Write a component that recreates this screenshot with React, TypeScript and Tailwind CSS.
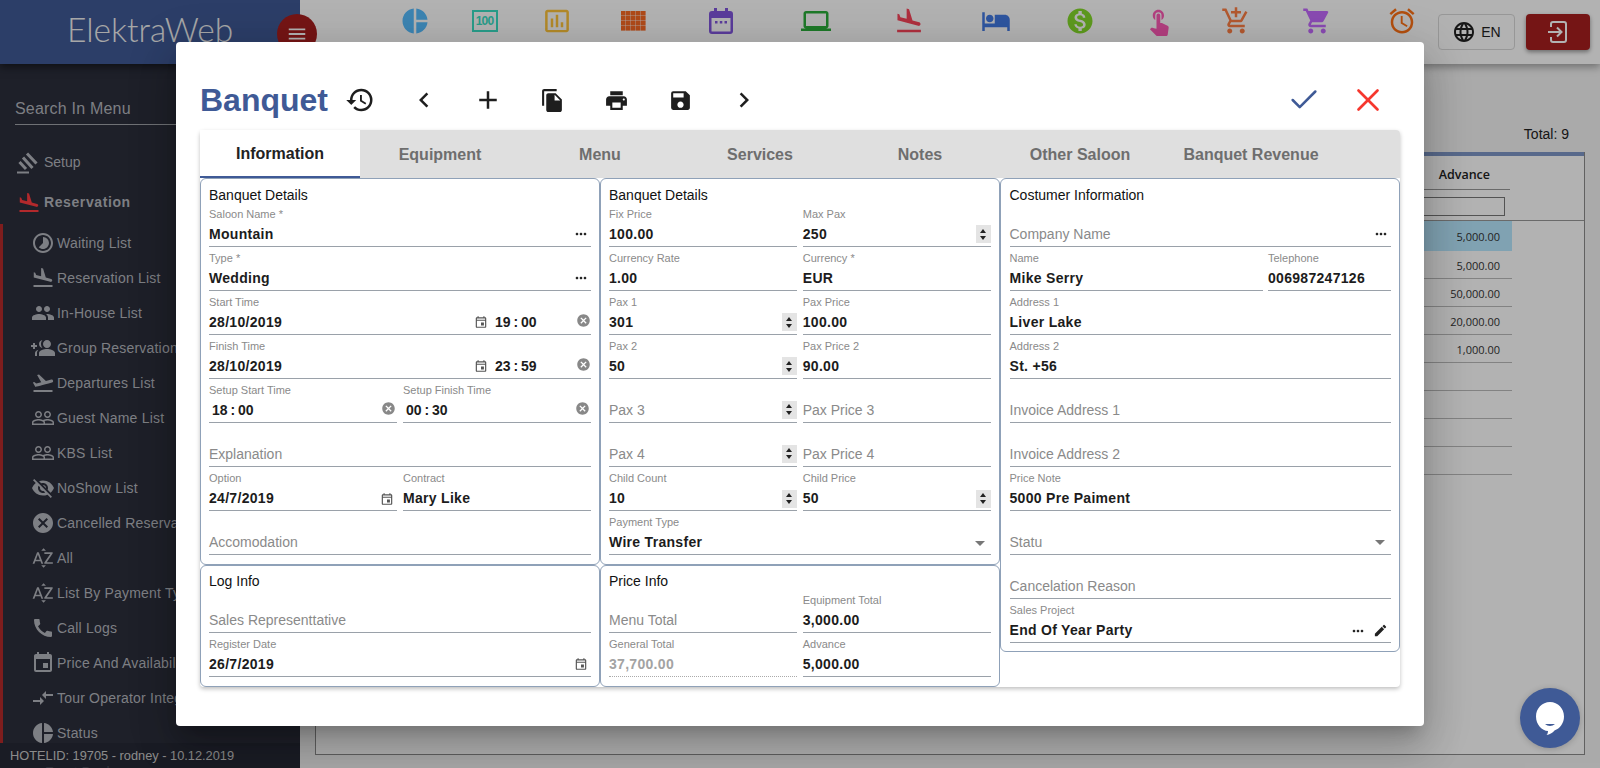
import type { ReactNode } from 'react';
import { Check, X } from 'lucide-react';
import {
  MdAccessAlarm, MdAdd, MdAddShoppingCart, MdArrowDropDown, MdCall, MdCancel, MdChevronLeft,
  MdChevronRight, MdCompareArrows, MdEdit, MdEvent, MdFileCopy, MdFlightLand, MdFlightTakeoff,
  MdGroupAdd, MdHistory, MdHotel, MdInsertChartOutlined, MdLanguage, MdLaptop, MdMenu, MdMonetizationOn,
  MdMoreHoriz, MdOutlineEvent, MdPeople, MdPeopleOutline, MdPieChart, MdPrint,
  MdSave, MdShoppingCart, MdSortByAlpha, MdTimelapse, MdTouchApp, MdVisibilityOff,
} from 'react-icons/md';

const sideItems: { label: string; icon: ReactNode }[] = [
  { label: 'Waiting List', icon: <MdTimelapse size={24} /> },
  { label: 'Reservation List', icon: <MdFlightLand size={24} /> },
  { label: 'In-House List', icon: <MdPeople size={24} /> },
  { label: 'Group Reservations', icon: <MdGroupAdd size={24} className="-scale-x-100" /> },
  { label: 'Departures List', icon: <MdFlightTakeoff size={24} /> },
  { label: 'Guest Name List', icon: <MdPeopleOutline size={24} /> },
  { label: 'KBS List', icon: <MdPeopleOutline size={24} /> },
  { label: 'NoShow List', icon: <MdVisibilityOff size={24} /> },
  { label: 'Cancelled Reservations', icon: <MdCancel size={24} /> },
  { label: 'All', icon: <MdSortByAlpha size={24} /> },
  { label: 'List By Payment Type', icon: <MdSortByAlpha size={24} /> },
  { label: 'Call Logs', icon: <MdCall size={24} /> },
  { label: 'Price And Availability', icon: <MdEvent size={24} /> },
  { label: 'Tour Operator Integration', icon: <MdCompareArrows size={24} /> },
  { label: 'Status', icon: <MdPieChart size={24} /> },
];

const topIcons: { cell: string; icon: ReactNode }[] = [
  { cell: 'w-[68px] text-[#56bdff]', icon: <MdPieChart size={30} /> },
  { cell: 'w-[71px] text-[#3ce0c5]', icon: <HundredIcon /> },
  { cell: 'w-[73px] text-[#ffc53c]', icon: <MdInsertChartOutlined size={30} /> },
  { cell: 'w-[81px] text-[#fb6a25]', icon: <BrickIcon /> },
  { cell: 'w-[94px] text-[#8156df]', icon: <CalendarIcon /> },
  { cell: 'w-[96px] text-[#2cae3c]', icon: <MdLaptop size={30} /> },
  { cell: 'w-[89px] text-[#fb455b]', icon: <MdFlightLand size={30} /> },
  { cell: 'w-[85px] text-[#437ae4]', icon: <MdHotel size={30} /> },
  { cell: 'w-[83px] text-[#86dc2b]', icon: <MdMonetizationOn size={30} /> },
  { cell: 'w-[76px] text-[#ff5bb6]', icon: <MdTouchApp size={30} /> },
  { cell: 'w-[77px] text-[#ff8045]', icon: <MdAddShoppingCart size={30} /> },
  { cell: 'w-[85px] text-[#c56aff]', icon: <MdShoppingCart size={30} /> },
  { cell: 'w-[86px] text-[#ff7216]', icon: <MdAccessAlarm size={30} /> },
];

const tabs = ['Information', 'Equipment', 'Menu', 'Services', 'Notes', 'Other Saloon', 'Banquet Revenue'];
const advances = ['5,000.00', '5,000.00', '50,000.00', '20,000.00', '1,000.00', '', '', '', ''];

function HundredIcon() {
  return (
    <div className="flex h-[22px] w-[26px] items-center justify-center border-[2.5px] border-current text-[12px] font-bold leading-none tracking-[-0.8px]">
      100
    </div>
  );
}

function BrickIcon() {
  return (
    <svg width="25" height="20" viewBox="0 0 25 20" fill="currentColor">
      {[0, 5, 10, 15].map((y) =>
        [0, 5, 10, 15, 20].map((x) => <rect key={`${x}-${y}`} x={x} y={y} width="4.6" height="4.6" />),
      )}
    </svg>
  );
}

function CalendarIcon() {
  return (
    <svg width="24" height="26" viewBox="0 0 24 26" fill="currentColor">
      <path d="M5 0h3v3h8V0h3v3h2a3 3 0 0 1 3 3v17a3 3 0 0 1-3 3H3a3 3 0 0 1-3-3V6a3 3 0 0 1 3-3h2zM2.500 10v13a.5.5 0 0 0 .5.5h18a.5.5 0 0 0 .5-.5V10z" />
      <rect x="6" y="13" width="2.500" height="2.500" />
      <rect x="10.800" y="13" width="2.500" height="2.500" />
      <rect x="15.500" y="13" width="2.500" height="2.500" />
    </svg>
  );
}

function SetupIcon() {
  return (
    <svg width="22" height="22" viewBox="0 0 22 22" fill="none" stroke="currentColor" strokeWidth="3">
      <path d="M10 1.500l9.500 10M6 5.500l9.500 10.500M2.500 10l6.500 7" />
      <path d="M0 20.500h12" strokeWidth="2" />
    </svg>
  );
}

function ExitIcon() {
  return (
    <svg width="22" height="24" viewBox="0 0 22 24" fill="none" stroke="currentColor" strokeWidth="2">
      <path d="M4 7V4a2 2 0 0 1 2-2h11a2 2 0 0 1 2 2v16a2 2 0 0 1-2 2H6a2 2 0 0 1-2-2v-3" />
      <path d="M1 12h13M10 7.500l4.500 4.500-4.500 4.500" />
    </svg>
  );
}

function Spinner() {
  return (
    <div className="flex h-[18px] w-[15px] shrink-0 flex-col items-center justify-center gap-[3px] bg-[#e4e4e4]">
      <div className="h-0 w-0 border-x-[3.5px] border-b-[4px] border-x-transparent border-b-[#222]" />
      <div className="h-0 w-0 border-x-[3.5px] border-t-[4px] border-x-transparent border-t-[#222]" />
    </div>
  );
}

function More() {
  return <MdMoreHoriz size={16} className="mr-[2px] shrink-0 text-[#222]" />;
}

function Calendar() {
  return <MdOutlineEvent size={14} className="mr-[3px] shrink-0 text-[#555]" />;
}

function Clear() {
  return <MdCancel size={15} className="-mt-[4px] shrink-0 text-[#888]" />;
}

function Field({ label, value, children, muted, dotted }: {
  label?: string;
  value?: string;
  children?: ReactNode;
  muted?: boolean;
  dotted?: boolean;
}) {
  return (
    <div className={`flex h-[44.1px] min-w-0 flex-col pt-[4px] border-b ${dotted ? 'border-dotted border-[#aaa]' : 'border-[#9aa1a9]'}`}>
      <div className="h-[14px] shrink-0 text-[11px] leading-[14px] text-[#8a8a8a]">{value || children ? label : ''}</div>
      <div className="mt-[1px] flex h-[25px] shrink-0 items-center justify-between whitespace-nowrap">
        {value || children ? (
          <>
            <span className={`text-[14px] font-bold tracking-[0.3px] ${muted ? 'text-[#a3a3a3]' : 'text-[#1c1c1c]'}`}>{value}</span>
            {children}
          </>
        ) : (
          <span className="text-[14px] text-[#8a8a8a]">{label}</span>
        )}
      </div>
    </div>
  );
}

function Time({ value, className = '' }: { value: string; className?: string }) {
  return <span className={`text-[14px] font-bold text-[#1c1c1c] [word-spacing:-1px] ${className}`}>{value}</span>;
}

function TimeField({ label, date, time }: { label: string; date: string; time: string }) {
  return (
    <Field label={label} value={date}>
      <div className="flex items-center">
        <Calendar />
        <Time value={time} className="ml-[4px] w-[81px]" />
        <Clear />
      </div>
    </Field>
  );
}

function Card({ title, compact, className = '', children }: { title: string; compact?: boolean; className?: string; children: ReactNode }) {
  return (
    <div className={`rounded-[6px] border border-[#8fa1b8] bg-white px-[8px] ${className}`}>
      <div className={`flex items-end text-[14px] leading-[16px] text-[#111] ${compact ? 'h-[22.5px] leading-[14px]' : 'h-[23.5px]'}`}>{title}</div>
      {children}
    </div>
  );
}

function Half({ children }: { children: ReactNode }) {
  return <div className="grid grid-cols-2 gap-x-[6px]">{children}</div>;
}

function Sidebar() {
  return (
    <aside className="relative flex h-full w-[300px] shrink-0 flex-col overflow-hidden bg-[#2b2e3b] text-[#b4b6bd]">
      <div className="flex h-[64px] shrink-0 items-center bg-[#3f5a96] pb-[5px] pl-[67px] font-['Lato',sans-serif] text-[33.5px] font-light text-[#f0f0f0] shadow-[0_3px_8px_rgba(0,0,0,0.5)]">
        ElektraWeb
      </div>
      <div className="mx-[15px] mt-[33px] h-[27.5px] shrink-0 border-b border-[#a0a2a8] text-[16px] leading-[24px] tracking-[0.2px]">
        Search In Menu
      </div>
      <div className="mt-[18px] flex h-[40px] shrink-0 items-center gap-[5px] pl-[17px] text-[14px]">
        <SetupIcon />
        Setup
      </div>
      <div className="flex h-[40px] shrink-0 items-center gap-[3px] pl-[17px] text-[14px] font-bold tracking-[0.6px]">
        <MdFlightLand size={24} className="text-[#ff3b3f]" />
        Reservation
      </div>
      <div className="mt-[1.5px] border-l-[3px] border-[#b52a2a] pl-[28px] pt-[1.5px]">
        {sideItems.map((item) => (
          <div key={item.label} className="flex h-[35px] items-center gap-[2px] whitespace-nowrap text-[14px] tracking-[0.2px]">
            {item.icon}
            {item.label}
          </div>
        ))}
      </div>
      <div className="absolute inset-x-0 bottom-0 h-[25px] overflow-hidden bg-[#262935] pl-[10px] pt-[5px] text-[12.8px] leading-[16px] text-[#c8c8c8]">
        HOTELID: 19705 - rodney - 10.12.2019
        <div className="pl-[35px] text-[14px] text-[#454855]">Front Desk</div>
      </div>
    </aside>
  );
}

function Background() {
  return (
    <div className="flex h-full">
      <Sidebar />
      <div className="flex min-w-0 flex-1 flex-col bg-[#f4f4f4]">
        <header className="flex h-[64px] shrink-0 items-center bg-white shadow-[0_3px_8px_rgba(0,0,0,0.35)]">
          <div className="flex h-full items-start pl-[81px] pt-[6px]">
            {topIcons.map((t, i) => (
              <div key={i} className={`flex h-[30px] items-center justify-center ${t.cell}`}>{t.icon}</div>
            ))}
          </div>
          <div className="ml-[-7px] flex h-[36px] w-[77px] items-center justify-center gap-[5px] rounded-[4px] border border-[#d8d8d8] text-[14px] text-[#222]">
            <MdLanguage size={24} />
            EN
          </div>
          <div className="ml-[11px] flex h-[36px] w-[64px] items-center justify-center rounded-[4px] bg-[#a81f1f] text-white shadow-[0_2px_4px_rgba(0,0,0,0.4)]">
            <ExitIcon />
          </div>
        </header>
        <div className="flex h-[88px] shrink-0 items-end justify-end pb-[10px] pr-[31px] text-[14px] leading-[16px] text-[#222]">
          Total: 9
        </div>
        <div className="mb-[13px] ml-[15px] mr-[15px] flex flex-1 flex-col border-x border-b border-[#8c8c8c] bg-white font-['Open_Sans',sans-serif]">
          <div className="h-[4px] shrink-0 bg-[#7f97c8]" />
          <div className="flex h-[34px] shrink-0 justify-end pr-[74px]">
            <div className="flex w-[200px] items-center justify-end border-b border-[#999] pr-[20px] pt-[5px] text-[12.5px] font-semibold text-[#222]">Advance</div>
          </div>
          <div className="flex h-[31px] shrink-0 items-center border-b border-[#999] pl-[400px] pr-[79px] pt-[2px]">
            <div className="h-[19px] w-full border border-[#777]" />
          </div>
          <div className="w-[1196px]">
            {advances.map((a, i) => (
              <div
                key={i}
                className={`flex items-center justify-end pr-[12px] pt-[3px] text-[11px] text-[#333] ${i === 0 ? 'h-[30px] bg-[#b8e8ff]' : 'h-[28px] border-b border-[#bbb]'}`}
              >
                {a}
              </div>
            ))}
          </div>
        </div>
      </div>
      <div className="absolute left-[277px] top-[14px] flex h-[40px] w-[40px] items-center justify-center rounded-full bg-[#a81f1f] text-white">
        <MdMenu size={22} />
      </div>
    </div>
  );
}

function Modal() {
  const tool = 'flex w-[64px] justify-center text-[#1e1e1e]';
  return (
    <div className="absolute left-[176px] top-[42px] h-[684px] w-[1248px] rounded-[4px] bg-white px-[24px] shadow-[0_11px_15px_-7px_rgba(0,0,0,0.2),0_24px_38px_3px_rgba(0,0,0,0.14),0_9px_46px_8px_rgba(0,0,0,0.12)]">
      <div className="flex h-[88px] items-center pt-[28px]">
        <h1 className="text-[32px] font-bold leading-none text-[#3f5a96]">Banquet</h1>
        <div className="flex items-center">
          <div className={tool}><MdHistory size={30} /></div>
          <div className={tool}><MdChevronLeft size={30} /></div>
          <div className={tool}><MdAdd size={30} /></div>
          <div className={tool}><MdFileCopy size={25} /></div>
          <div className={tool}><MdPrint size={25} /></div>
          <div className={tool}><MdSave size={25} /></div>
          <div className={tool}><MdChevronRight size={30} /></div>
        </div>
        <div className="ml-auto flex items-center">
          <div className="flex w-[64px] justify-center"><Check size={34} strokeWidth={1.8} className="text-[#3f5a96]" /></div>
          <div className="flex w-[64px] justify-center"><X size={38} strokeWidth={1.7} className="text-[#f6372e]" /></div>
        </div>
      </div>

      <div className="w-[1200px] rounded-[4px] shadow-[0_2px_4px_rgba(0,0,0,0.25)]">
        <div className="flex h-[48px] rounded-t-[4px] bg-[#dfdfdf] text-[16px] font-bold text-[#6e6e6e]">
          {tabs.map((tab, i) => (
            <div
              key={tab}
              className={`flex h-full items-center justify-center pt-[2px] ${i === 0 ? 'w-[160px] border-b-2 border-[#3f5a96] bg-white text-[#222]' : i === 6 ? 'w-[182px]' : 'w-[160px]'}`}
            >
              {tab}
            </div>
          ))}
        </div>
        <div className="grid h-[509px] grid-cols-[400px_399.5px_400.5px]">
          <div>
            <Card title="Banquet Details" className="h-[387px]">
              <Field label="Saloon Name *" value="Mountain"><More /></Field>
              <Field label="Type *" value="Wedding"><More /></Field>
              <TimeField label="Start Time" date="28/10/2019" time="19 : 00" />
              <TimeField label="Finish Time" date="28/10/2019" time="23 : 59" />
              <Half>
                <Field label="Setup Start Time">
                  <Time value="18 : 00" className="-order-1 pl-[3px]" />
                  <span className="mr-[1px]"><Clear /></span>
                </Field>
                <Field label="Setup Finish Time">
                  <Time value="00 : 30" className="-order-1 pl-[3px]" />
                  <span className="mr-[1px]"><Clear /></span>
                </Field>
              </Half>
              <Field label="Explanation" />
              <Half>
                <Field label="Option" value="24/7/2019"><Calendar /></Field>
                <Field label="Contract" value="Mary Like" />
              </Half>
              <Field label="Accomodation" />
            </Card>
            <Card title="Log Info" compact className="h-[122px]">
              <Field label="Sales Representtative" />
              <Field label="Register Date" value="26/7/2019"><Calendar /></Field>
            </Card>
          </div>
          <div>
            <Card title="Banquet Details" className="h-[387px]">
              <Half>
                <Field label="Fix Price" value="100.00" />
                <Field label="Max Pax" value="250"><Spinner /></Field>
                <Field label="Currency Rate" value="1.00" />
                <Field label="Currency *" value="EUR" />
                <Field label="Pax 1" value="301"><Spinner /></Field>
                <Field label="Pax Price" value="100.00" />
                <Field label="Pax 2" value="50"><Spinner /></Field>
                <Field label="Pax Price 2" value="90.00" />
                <div className="relative">
                  <Field label="Pax 3" />
                  <div className="absolute right-0 top-[22px]"><Spinner /></div>
                </div>
                <Field label="Pax Price 3" />
                <div className="relative">
                  <Field label="Pax 4" />
                  <div className="absolute right-0 top-[22px]"><Spinner /></div>
                </div>
                <Field label="Pax Price 4" />
                <Field label="Child Count" value="10"><Spinner /></Field>
                <Field label="Child Price" value="50"><Spinner /></Field>
              </Half>
              <Field label="Payment Type" value="Wire Transfer">
                <MdArrowDropDown size={24} className="-mr-[1px] text-[#777]" />
              </Field>
            </Card>
            <Card title="Price Info" compact className="h-[122px]">
              <Half>
                <Field label="Menu Total" />
                <Field label="Equipment Total" value="3,000.00" />
                <Field label="General Total" value="37,700.00" muted dotted />
                <Field label="Advance" value="5,000.00" />
              </Half>
            </Card>
          </div>
          <div>
            <Card title="Costumer Information" className="h-[474px] pl-[9px]">
              <div className="relative">
                <Field label="Company Name" />
                <div className="absolute right-0 top-[23px]"><More /></div>
              </div>
              <div className="grid grid-cols-[1fr_123px] gap-x-[5px]">
                <Field label="Name" value="Mike Serry" />
                <Field label="Telephone" value="006987247126" />
              </div>
              <Field label="Address 1" value="Liver Lake" />
              <Field label="Address 2" value="St. +56" />
              <Field label="Invoice Address 1" />
              <Field label="Invoice Address 2" />
              <Field label="Price Note" value="5000 Pre Paiment" />
              <div className="relative">
                <Field label="Statu" />
                <MdArrowDropDown size={24} className="absolute right-[-1px] top-[19px] text-[#777]" />
              </div>
              <Field label="Cancelation Reason" />
              <Field label="Sales Project" value="End Of Year Party">
                <div className="flex items-center gap-[5px]">
                  <More />
                  <MdEdit size={15} className="mr-[3px] text-[#222]" />
                </div>
              </Field>
            </Card>
          </div>
        </div>
      </div>
    </div>
  );
}

function ChatBubble() {
  return (
    <div className="absolute left-[1520px] top-[688px] flex h-[60px] w-[60px] items-center justify-center rounded-full bg-[#3f5a96] shadow-[0_1px_6px_rgba(0,0,0,0.2)]">
      <svg width="30" height="34" viewBox="0 0 30 34">
        <path d="M15 1C7 1 1 7.500 1 15.500S7 30 13 30c0 1.500-.5 3-1.500 4 3-.5 6-2 8-4.500C25 27.500 29 22 29 15.500 29 7.500 23 1 15 1z" fill="#fff" />
        <path d="M10 23c3 2.500 7 2.500 10 0z" fill="#3f5a96" />
      </svg>
    </div>
  );
}

export default function App() {
  return (
    <div className="relative h-screen w-screen overflow-hidden font-['Liberation_Sans',Arial,sans-serif]">
      <Background />
      <div className="absolute inset-0 bg-black/30" />
      <Modal />
      <ChatBubble />
    </div>
  );
}
